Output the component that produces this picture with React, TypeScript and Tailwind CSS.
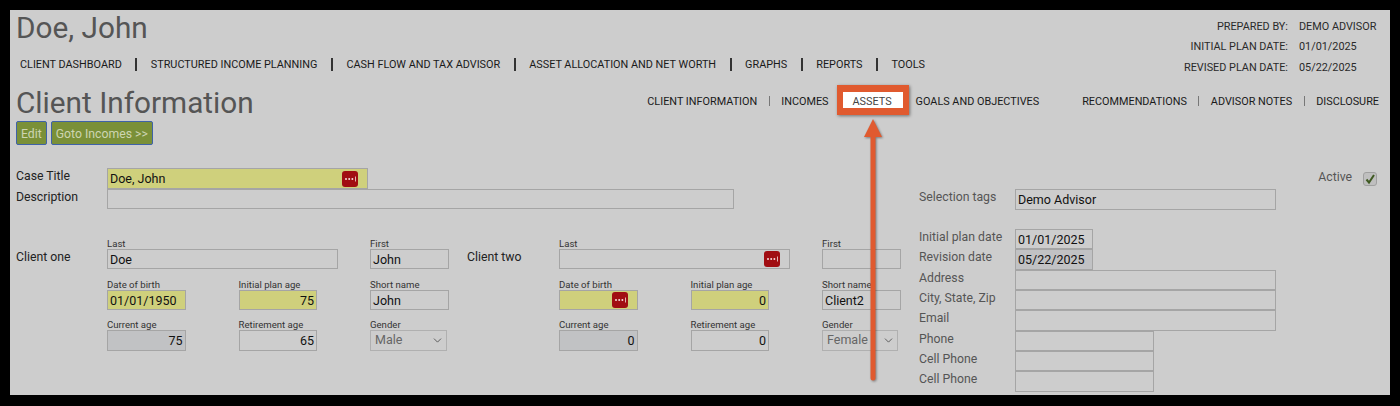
import React from "react";
import { ChevronDown } from "lucide-react";

const Dots = () => (
  <svg width="16" height="16" viewBox="0 0 16 16" className="absolute right-[9px] top-[1.5px]">
    <rect width="16" height="16" rx="3" fill="#a10d12" />
    <circle cx="4" cy="8" r="1" fill="#f4dcdc" />
    <circle cx="7.2" cy="8" r="1" fill="#f4dcdc" />
    <circle cx="10.4" cy="8" r="1" fill="#f4dcdc" />
    <rect x="13" y="5.5" width="0.8" height="5" fill="#f4dcdc" />
  </svg>
);

type BoxProps = {
  value?: string;
  w?: string;
  tone?: "plain" | "yellow" | "grey";
  right?: boolean;
  dots?: boolean;
};

const Box = ({ value = "", w = "w-full", tone = "plain", right, dots }: BoxProps) => (
  <div
    className={`relative h-[20.33px] shrink-0 border-[1.5px] border-[#a5a5a5] px-[2px] text-[12.5px] leading-[19px] text-[#111] ${w} ${
      tone === "yellow" ? "bg-[#cfd07c]" : tone === "grey" ? "bg-[#c1c2c4]" : "bg-[#cdcdcd]"
    } ${right ? "text-right" : ""}`}
  >
    {value}
    {dots && <Dots />}
  </div>
);

const Field = ({ label, className = "", ...p }: BoxProps & { label: string; className?: string }) => (
  <div className={`flex flex-col ${className}`}>
    <span className="h-[11px] text-[9.6px] leading-[11px] text-[#333] whitespace-nowrap">{label}</span>
    <Box {...p} />
  </div>
);

const Gender = ({ value, w }: { value: string; w: string }) => (
  <div className="flex flex-col">
    <span className="h-[11px] text-[9.6px] leading-[11px] text-[#333]">Gender</span>
    <div className={`flex h-[20.33px] items-center justify-between border-[1.5px] border-[#b0b0b0] pl-[4px] pr-[2px] text-[12.5px] text-[#666] ${w}`}>
      <span>{value}</span>
      <ChevronDown size={13} strokeWidth={1.5} className="text-[#444]" />
    </div>
  </div>
);

type ClientProps = {
  label: string;
  labelW: string;
  w: string;
  last?: string;
  lastDots?: boolean;
  first?: string;
  dob?: string;
  dobDots?: boolean;
  planAge: string;
  shortName: string;
  current: string;
  retire: string;
  gender: string;
  genderW: string;
};

const Client = (c: ClientProps) => (
  <div className={`flex shrink-0 ${c.w}`}>
    <div className={`${c.labelW} shrink-0 pt-[12px] text-[12.25px] leading-[15px] text-[#222]`}>{c.label}</div>
    <div className="grid grid-cols-[131.5px_131.5px_80px] gap-y-[9.33px]">
      <Field label="Last" className="col-span-2" value={c.last} w="w-[231px]" dots={c.lastDots} />
      <Field label="First" value={c.first} w="w-[79px]" />
      <Field label="Date of birth" value={c.dob} w="w-[78.5px]" tone="yellow" dots={c.dobDots} />
      <Field label="Initial plan age" value={c.planAge} w="w-[78.5px]" tone="yellow" right />
      <Field label="Short name" value={c.shortName} w="w-[79px]" />
      <Field label="Current age" value={c.current} w="w-[78.5px]" tone="grey" right />
      <Field label="Retirement age" value={c.retire} w="w-[78.5px]" right />
      <Gender value={c.gender} w={c.genderW} />
    </div>
  </div>
);

const SideRow = ({ label, ...p }: BoxProps & { label: string }) => (
  <div className="flex items-start">
    <span className="w-[96px] shrink-0 pt-[1px] text-[12.25px] leading-[15px] text-[#555]">{label}</span>
    <Box {...p} />
  </div>
);

const mainNav = [
  "CLIENT DASHBOARD",
  "STRUCTURED INCOME PLANNING",
  "CASH FLOW AND TAX ADVISOR",
  "ASSET ALLOCATION AND NET WORTH",
  "GRAPHS",
  "REPORTS",
  "TOOLS",
];

const Pipe = () => <span className="mx-[11.5px] h-[10px] w-px bg-[#777]" />;

export default function App() {
  return (
    <div className="h-[406px] w-[1400px] overflow-hidden bg-black pl-[10px] pt-[10px] font-['Roboto',sans-serif]">
      <div className="relative h-[385px] w-[1380px] bg-[#cdcdcd] px-[6px]">
        {/* Header */}
        <div className="flex items-start justify-between">
          <div>
            <h1 className="text-[29.75px] leading-[36px] text-[#555]">Doe, John</h1>
            <nav className="mt-[10px] flex items-center pl-[4px] text-[10.85px] leading-[17px] text-[#1a1a1a]">
              {mainNav.map((n, i) => (
                <React.Fragment key={n}>
                  {i > 0 && <span className="mx-[13.5px] h-[13px] w-[2px] bg-[#333]" />}
                  <span className="whitespace-nowrap">{n}</span>
                </React.Fragment>
              ))}
            </nav>
          </div>
          <div className="mr-[6px] mt-[7px] grid grid-cols-[auto_79px] gap-x-[11px] text-[10.85px] leading-[20.4px] text-[#2a2a2a]">
            <span className="text-right">PREPARED BY:</span>
            <span className="whitespace-nowrap">DEMO ADVISOR</span>
            <span className="text-right">INITIAL PLAN DATE:</span>
            <span>01/01/2025</span>
            <span className="text-right">REVISED PLAN DATE:</span>
            <span>05/22/2025</span>
          </div>
        </div>

        {/* Page title and sub navigation */}
        <div className="mt-[7px] flex items-center justify-between">
          <h2 className="text-[29.75px] leading-[36px] text-[#555]">Client Information</h2>
          <nav className="mb-[4px] flex items-center pr-[5px] text-[10.85px] leading-[17px] text-[#1a1a1a]">
            <span>CLIENT INFORMATION</span>
            <Pipe />
            <span>INCOMES</span>
            <span className="relative mx-[24px] text-[#444]">
              <span className="absolute -left-[16px] -top-[7.5px] h-[30px] w-[72px] border-x-[6px] border-y-[7px] border-[#e05a2f] bg-white shadow-[1px_1px_3px_rgba(0,0,0,0.45)]" />
              <span className="relative">ASSETS</span>
            </span>
            <span>GOALS AND OBJECTIVES</span>
            <span className="ml-[43px]">RECOMMENDATIONS</span>
            <Pipe />
            <span>ADVISOR NOTES</span>
            <Pipe />
            <span>DISCLOSURE</span>
          </nav>
        </div>

        {/* Buttons */}
        <div className="flex gap-[4px] text-[12.25px] text-[#cdd5b2]">
          <button className="h-[24px] rounded-[2px] border-[1.5px] border-[#3f62a8] bg-[#7a9038] px-[4px] pt-[1px]">Edit</button>
          <button className="h-[24px] rounded-[2px] border-[1.5px] border-[#3f62a8] bg-[#7a9038] px-[4px] pt-[1px]">Goto Incomes &gt;&gt;</button>
        </div>

        {/* Form */}
        <div className="mt-[23px] flex">
          <div className="w-[903px] shrink-0">
            <div className="flex">
              <span className="w-[91px] pt-[1px] text-[12.25px] leading-[15px] text-[#222]">Case Title</span>
              <Box value="Doe, John" w="w-[261px]" tone="yellow" dots />
            </div>
            <div className="flex">
              <span className="w-[91px] pt-[1px] text-[12.25px] leading-[15px] text-[#222]">Description</span>
              <Box w="w-[627px]" />
            </div>
            <div className="mt-[29px] flex">
              <Client
                label="Client one"
                labelW="w-[91px]"
                w="w-[451px]"
                last="Doe"
                first="John"
                dob="01/01/1950"
                planAge="75"
                shortName="John"
                current="75"
                retire="65"
                gender="Male"
                genderW="w-[77px]"
              />
              <Client
                label="Client two"
                labelW="w-[92px]"
                w="w-[452px]"
                lastDots
                dobDots
                planAge="0"
                shortName="Client2"
                current="0"
                retire="0"
                gender="Female"
                genderW="w-[76px]"
              />
            </div>
          </div>

          <div className="w-[459px] shrink-0">
            <div className="flex h-[21px] items-start justify-end gap-[11px] pr-[1px]">
              <span className="pt-[1px] text-[12.25px] leading-[16px] text-[#555]">Active</span>
              <span className="mt-[4px] flex h-[14px] w-[14px] items-center justify-center rounded-[3px] border border-[#a0a0a0] bg-[#bfbfbf]">
                <svg width="12" height="12" viewBox="0 0 12 12">
                  <path d="M2.5 6.5 L5 9.5 L10 2" fill="none" stroke="#3f5a22" strokeWidth="2" />
                </svg>
              </span>
            </div>
            <SideRow label="Selection tags" value="Demo Advisor" w="w-[261px]" />
            <div className="mt-[19.5px] flex flex-col">
              <SideRow label="Initial plan date" value="01/01/2025" w="w-[78px]" />
              <SideRow label="Revision date" value="05/22/2025" w="w-[78px]" tone="grey" />
              <SideRow label="Address" w="w-[261px]" />
              <SideRow label="City, State, Zip" w="w-[261px]" />
              <SideRow label="Email" w="w-[261px]" />
              <SideRow label="Phone" w="w-[139px]" />
              <SideRow label="Cell Phone" w="w-[139px]" />
              <SideRow label="Cell Phone" w="w-[139px]" />
            </div>
          </div>
        </div>

        {/* Annotation: arrow */}
        <svg className="absolute left-[850px] top-[108px]" width="26" height="266" viewBox="0 0 26 266">
          <path
            d="M13 1 L22 19 L15.5 19 L15.5 260 Q15.5 262.5 13 262.5 Q10.5 262.5 10.5 260 L10.5 19 L4 19 Z"
            fill="#e05a2f"
            style={{ filter: "drop-shadow(1px 1px 1px rgba(0,0,0,0.4))" }}
          />
        </svg>
      </div>
    </div>
  );
}
